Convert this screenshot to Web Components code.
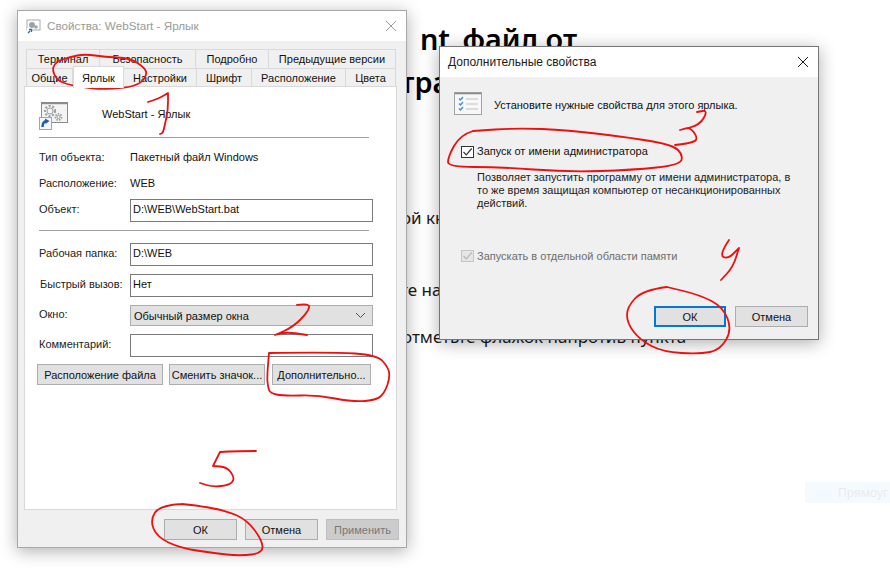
<!DOCTYPE html>
<html lang="ru"><head><meta charset="utf-8"><title>Свойства</title>
<style>
html,body{margin:0;padding:0;background:#fff}
body{width:890px;height:584px;overflow:hidden;position:relative;font-family:"Liberation Sans",sans-serif;color:#000}
</style></head><body>
<x-article>
  <x-h style="padding-top:17px;width:577px"><span style="margin-right:5px">nt</span> файл от</x-h>
  <x-h style="width:515px">администратора</x-h>
  <x-p style="margin-top:103px;padding-left:401px">ой кнопкой</x-p>
  <x-p style="margin-top:48px;padding-left:400px">те нажать</x-p>
  <x-p style="margin-top:23px;padding-left:402px">отметьте флажок напротив пункта</x-p>
</x-article>
<x-hint>Прямоуг</x-hint>

<x-window style="left:17px;top:10px;width:388px;height:536px" wintitle="Свойства: WebStart - Ярлык" inactive icon>
  <x-tabrow offset="0">
    <x-tab style="width:74px">Терминал</x-tab><x-tab style="width:96px">Безопасность</x-tab><x-tab style="width:73px">Подробно</x-tab><x-tab style="width:127px">Предыдущие версии</x-tab>
  </x-tabrow>
  <x-tabrow>
    <x-tab style="width:47px">Общие</x-tab><x-tab selected style="width:51px">Ярлык</x-tab><x-tab style="width:73px">Настройки</x-tab><x-tab style="width:55px">Шрифт</x-tab><x-tab style="width:94px">Расположение</x-tab><x-tab style="width:50px">Цвета</x-tab>
  </x-tabrow>
  <x-panel>
    <x-row h="28" mt="15"><x-appicon></x-appicon><x-text style="margin:0 0 4px 33px">WebStart - Ярлык</x-text></x-row>
    <x-sep mt="7"></x-sep>
    <x-row h="14" mt="12"><x-label style="padding-bottom:0">Тип объекта:</x-label><x-text>Пакетный файл Windows</x-text></x-row>
    <x-row h="14" mt="12"><x-label style="padding-bottom:0">Расположение:</x-label><x-text>WEB</x-text></x-row>
    <x-row h="23" mt="9"><x-label>Объект:</x-label><x-input>D:\WEB\WebStart.bat</x-input></x-row>
    <x-sep mt="8"></x-sep>
    <x-row h="23" mt="12"><x-label>Рабочая папка:</x-label><x-input>D:\WEB</x-input></x-row>
    <x-row h="23" mt="8"><x-label style="padding-left:1px">Быстрый вызов:</x-label><x-input>Нет</x-input></x-row>
    <x-row h="21" mt="8"><x-label>Окно:</x-label><x-select>Обычный размер окна</x-select></x-row>
    <x-row h="23" mt="8"><x-label>Комментарий:</x-label><x-input></x-input></x-row>
    <x-btnrow mt="7" left="12">
      <x-button style="width:126px">Расположение файла</x-button>
      <x-button style="width:96px;margin-left:6px">Сменить значок...</x-button>
      <x-button style="width:99px;margin-left:7px">Дополнительно...</x-button>
    </x-btnrow>
  </x-panel>
  <x-btnrow mt="9" left="146">
    <x-button style="width:73px">ОК</x-button>
    <x-button style="width:73px;margin-left:8px">Отмена</x-button>
    <x-button disabled style="width:73px;margin-left:8px">Применить</x-button>
  </x-btnrow>
</x-window>

<x-window style="left:439px;top:46px;width:378px;height:292px" wintitle="Дополнительные свойства">
  <x-row h="23" mt="15"><x-listicon></x-listicon><x-text style="margin:3px 0 0 12px">Установите нужные свойства для этого ярлыка.</x-text></x-row>
  <x-check checked style="margin:31px 0 0 21px">Запуск от имени администратора</x-check>
  <x-note>Позволяет запустить программу от имени администратора, в то же время защищая компьютер от несанкционированных действий.</x-note>
  <x-check checked disabled style="margin:40px 0 0 21px">Запускать в отдельной области памяти</x-check>
  <x-btnrow mt="44" left="214">
    <x-button primary style="width:72px">ОК</x-button>
    <x-button style="width:73px;margin-left:9px">Отмена</x-button>
  </x-btnrow>
</x-window>

<x-ink></x-ink>

<script>
const UI='"Liberation Sans",sans-serif';
function def(name,css,html,extra){
  customElements.define(name,class extends HTMLElement{
    constructor(){super();this.attachShadow({mode:'open'}).innerHTML=`<style>${css}</style>${html}`;}
    connectedCallback(){extra&&extra(this)}
  });
}
const margins=el=>{const m=el.getAttribute('mt');if(m)el.style.marginTop=m+'px';};
def('x-article',':host{display:block;position:absolute;inset:0;white-space:nowrap}','<slot></slot>');
def('x-h',':host{display:block;font:600 28.8px/43px "Noto Sans",sans-serif;color:#000;text-align:right}','<slot></slot>');
def('x-p',':host{display:block;font:400 17px/24px "Noto Sans",sans-serif;color:#1a1a1a}','<slot></slot>');
def('x-hint',':host{display:block;position:absolute;left:805px;top:482px;width:85px;height:21px;box-sizing:border-box;padding-left:33px;background:#f5faff;color:#e9ebee;font:12px/21px "Noto Sans",sans-serif;overflow:hidden;white-space:nowrap}','<slot></slot>');

def('x-window',`:host{display:flex;flex-direction:column;position:absolute;box-sizing:content-box;background:#f0f0f0;border:1px solid #a8a8a8;box-shadow:0 3px 16px rgba(0,0,0,.32);font:11px/14px ${UI};color:#000;white-space:nowrap}
:host(:not([inactive])){border-color:#767676}
.bar{display:flex;align-items:center;height:30px;background:#fff;padding:0 0 0 8px;flex:none;color:#1a1a1a;font-size:12px}
:host([inactive]) .bar{color:#9a9a9a;font-size:11.7px}
.ti{display:none;margin-right:6px}
:host([icon]) .ti{display:block}
.t{flex:1}
.x{margin-right:9px}
.body{flex:1;display:flex;flex-direction:column;min-height:0}`,
`<div class="bar"><svg class="ti" width="15" height="15" viewBox="0 0 15 15"><rect x="1" y="1" width="13" height="10" fill="#fff" stroke="#a9a9a9"/><circle cx="6" cy="6" r="3" fill="#9aa3a8"/><circle cx="10" cy="8" r="1.8" fill="#9aa3a8"/><rect x="1" y="9" width="5" height="5" fill="#fff"/><path d="M2 14l2-2M3 10.5h2.5V13" fill="none" stroke="#1c6fc8" stroke-width="1.3"/></svg><span class="t"></span><svg class="x" width="12" height="12" viewBox="0 0 12 12"><path d="M1 1l10 10M11 1L1 11" stroke="currentColor" stroke-width="1" fill="none"/></svg></div><div class="body"><slot></slot></div>`,
el=>{el.shadowRoot.querySelector('.t').textContent=el.getAttribute('wintitle')});

def('x-tabrow',`:host{display:flex;flex:none;height:18px;margin-left:8px;position:relative}
:host([offset]){margin-top:8px;height:19px}`,'<slot></slot>');
def('x-tab',`:host{display:flex;align-items:center;justify-content:center;box-sizing:border-box;background:#f0f0f0;border:1px solid #d9d9d9;border-bottom:0;border-left-width:0;flex:none;color:#111}
:host(:first-child){border-left-width:1px}
:host([selected]){background:#fff;height:22px;margin-top:-2px;position:relative;z-index:2;border-left-width:1px;margin-bottom:-2px}`,'<slot></slot>');
def('x-panel',`:host{display:block;flex:none;box-sizing:border-box;margin:0 9px 0 6px;height:424px;background:#fff;border:1px solid #d9d9d9}`,'<slot></slot>');
def('x-row',`:host{display:flex;align-items:center;padding-left:14px;flex:none}`,'<slot></slot>',
el=>{margins(el);el.style.height=el.getAttribute('h')+'px'});
def('x-sep',`:host{display:block;height:1px;background:#a0a0a0;margin-left:14px;width:330px}`,'',margins);
def('x-label',`:host{display:block;box-sizing:border-box;width:91px;flex:none;color:#222;padding-bottom:4px}`,'<slot></slot>');
def('x-text',`:host{display:block;color:#111}`,'<slot></slot>');
def('x-input',`:host{display:flex;align-items:center;box-sizing:border-box;width:243px;height:23px;background:#fff;border:1px solid #7a7a7a;padding:0 0 3px 2px;color:#111}`,'<slot></slot>');
def('x-select',`:host{display:flex;align-items:center;justify-content:space-between;box-sizing:border-box;width:243px;height:21px;background:#e1e1e1;border:1px solid #adadad;padding:0 6px 0 3px;color:#111}`,
`<slot></slot><svg width="11" height="7" viewBox="0 0 11 7"><path d="M1 1l4.5 4.5L10 1" fill="none" stroke="#555" stroke-width="1"/></svg>`);
def('x-btnrow',`:host{display:flex;flex:none}`,'<slot></slot>',el=>{margins(el);el.style.paddingLeft=el.getAttribute('left')+'px'});
def('x-button',`:host{display:flex;align-items:center;justify-content:center;box-sizing:border-box;height:21px;background:#e1e1e1;border:1px solid #adadad;flex:none;color:#111}
:host([primary]){border:2px solid #0078d7}
:host([disabled]){background:#ccc;border-color:#bfbfbf;color:#787878}`,'<slot></slot>');
def('x-check',`:host{display:flex;align-items:center;height:12px;color:#111}
:host([disabled]){color:#6d6d6d}
:host(:not([disabled])) .l{padding-bottom:2px}
.b{width:13px;height:12px;box-sizing:border-box;border:1px solid #333;background:#fff;margin-right:3px;flex:none;display:flex}
:host([disabled]) .b{border-color:#c4c4c4;background:#e6e6e6}
path{stroke:#333}
:host([disabled]) path{stroke:#b5b5b5}`,
`<span class="b"><svg width="11" height="10" viewBox="0 0 11 10"><path d="M1.5 5l2.8 2.8L9.7 1.5" fill="none" stroke-width="1.2"/></svg></span><span class="l"><slot></slot></span>`);
def('x-note',`:host{display:block;margin:13px 24px 0 37px;line-height:13px;white-space:normal;color:#222}`,'<slot></slot>');
def('x-appicon',`:host{display:block;width:30px;height:28px;flex:none}`,
`<svg width="30" height="28" viewBox="0 0 30 28"><rect x="2.5" y=".5" width="26" height="20" fill="#f4f4f4" stroke="#8b8b8b"/><path d="M2.5 1.5h26" stroke="#8b8b8b" stroke-width="1.4"/>
<g fill="none" stroke="#9aa0a5"><circle cx="11" cy="9" r="3"/><circle cx="11" cy="9" r="5" stroke-width="2.2" stroke-dasharray="2 1.6"/><circle cx="19.5" cy="15" r="1.6"/><circle cx="19.5" cy="15" r="3.1" stroke-width="1.7" stroke-dasharray="1.6 1.1"/></g>
<rect x=".5" y="15.5" width="12" height="12" fill="#f4f6f9" stroke="#a5a5a5"/><path d="M3.5 25c0-4 1.5-5.5 4-6" fill="none" stroke="#1c5fae" stroke-width="2.4"/><path d="M6 16.5l4.5 2.6-4 2.8z" fill="#1c5fae"/></svg>`);
def('x-listicon',`:host{display:block;width:28px;height:23px;flex:none}`,
`<svg width="28" height="23" viewBox="0 0 28 23"><rect x=".5" y=".5" width="27" height="22" fill="#f7f7f7" stroke="#a3a3a3"/><path d="M1 1.5h26" stroke="#8d8d8d" stroke-width="1.6"/>
<path d="M12 7h12M12 12h12M12 17h12" stroke="#d4d4d4" stroke-width="1.6"/><path d="M5 6.5l1.5 1.5 2.5-3M5 11.5l1.5 1.5 2.5-3M5 16.5l1.5 1.5 2.5-3" fill="none" stroke="#4a90d9" stroke-width="1.5"/></svg>`);

const inks=[
"90,88 62,85 52,72 55,62 70,57 85,54 105,57 130,58 145,68 147,75 140,84 125,88 100,89 90,88",
"148,102 158,99 168,93 168,93 168,110 165,124 163,133 160,134",
"297,305 310,303 308,312 293,327 275,335 275,335 287,332 307,335",
"269,353 333,352 377,355 388,367 390,377 385,392 377,400 353,402 317,395 283,396 270,393 268,387 267,377 269,353",
"256,451 238,451 220,452 220,452 213,466 213,466 227,467 235,478 230,485 213,487 200,483",
"182,504 160,505 150,520 157,537 180,548 213,553 240,556 263,553 262,540 247,520 227,511 200,506 182,504",
"675,145 693,143 698,138 690,127 680,130 680,130 700,125 708,110 697,112",
"473,131 460,135 448,157 448,167 500,167 567,172 633,170 680,165 683,155 673,145 633,138 567,130 517,128 473,131",
"729,240 719,255 728,259 739,248 739,248 733,267 721,280",
"667,287 643,290 627,307 627,323 640,340 663,352 700,354 720,350 732,330 723,307 700,295 667,287"];
function smooth(s){const p=s.split(' ').map(a=>a.split(',').map(Number));let d=`M${p[0]}`;
  for(let i=1;i<p.length-1;i++){const m=[(p[i][0]+p[i+1][0])/2,(p[i][1]+p[i+1][1])/2];d+=`Q${p[i]} ${m}`;}
  return d+`L${p[p.length-1]}`;}
def('x-ink',`:host{display:block;position:absolute;inset:0;pointer-events:none}svg{display:block}`,
`<svg width="890" height="584" viewBox="0 0 890 584"><path fill="none" stroke="#f00e0e" stroke-width="1.8" stroke-linecap="round" stroke-linejoin="round" d="${inks.map(smooth).join('')}"/></svg>`);
</script>
</body></html>
